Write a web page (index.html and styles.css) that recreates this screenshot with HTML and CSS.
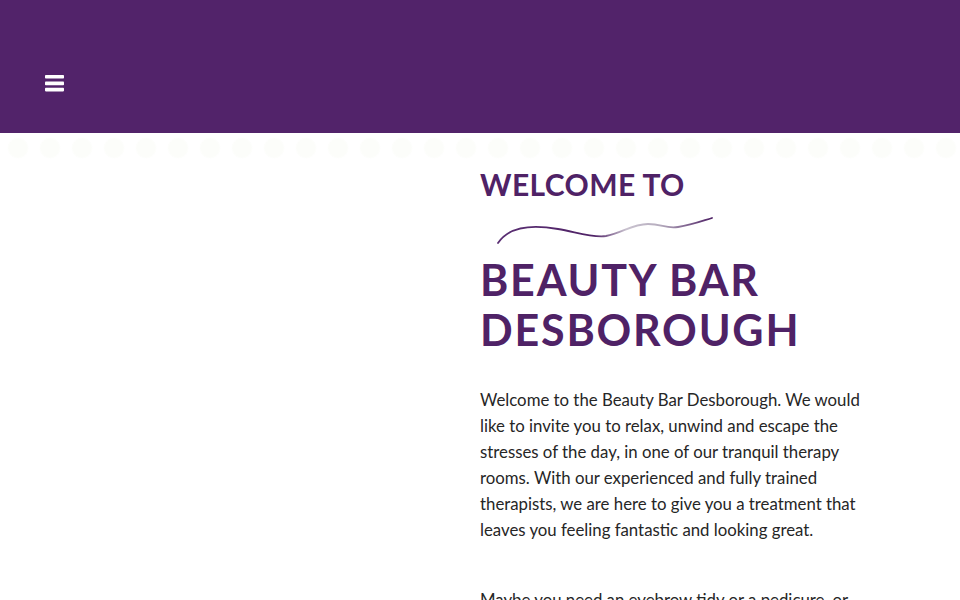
FILE: index.html
```html
<!DOCTYPE html>
<html lang="en">
<head>
<meta charset="utf-8">
<title>Beauty Bar Desborough</title>
<link rel="stylesheet" href="styles.css">
</head>
<body>
<header class="site-header">
  <button class="menu-toggle" aria-label="Menu">
    <svg width="19" height="17" viewBox="0 0 19 17">
      <rect x="0" y="0" width="19" height="3.6" rx="0.8" fill="#fff"/>
      <rect x="0" y="6.6" width="19" height="3.6" rx="0.8" fill="#fff"/>
      <rect x="0" y="12.8" width="19" height="3.6" rx="0.8" fill="#fff"/>
    </svg>
  </button>
</header>
<div class="dots"></div>
<main class="intro">
  <div class="intro-media"></div>
  <section class="intro-text">
    <h2 class="kicker">WELCOME TO</h2>
    <svg class="swoosh" width="220" height="34" viewBox="0 0 220 34">
      <defs>
        <linearGradient id="sw" x1="0" y1="0" x2="1" y2="0">
          <stop offset="0" stop-color="#5a2f73"/>
          <stop offset="0.45" stop-color="#4f2266"/>
          <stop offset="0.6" stop-color="#c9c2cf"/>
          <stop offset="0.75" stop-color="#b7aebf"/>
          <stop offset="1" stop-color="#4f2266"/>
        </linearGradient>
      </defs>
      <path d="M2 32 C 14 14, 40 14, 62 18 C 80 21, 96 27, 110 25 C 126 22, 136 13, 152 13 C 166 13, 170 18, 182 16 C 196 14, 206 10, 216 7" fill="none" stroke="url(#sw)" stroke-width="1.8" stroke-linecap="round"/>
    </svg>
    <h1 class="title">BEAUTY BAR DESBOROUGH</h1>
    <p class="lead">Welcome to the Beauty Bar Desborough. We would like to invite you to relax, unwind and escape the stresses of the day, in one of our tranquil therapy rooms. With our experienced and fully trained therapists, we are here to give you a treatment that leaves you feeling fantastic and looking great.</p>
    <p class="lead">Maybe you need an eyebrow tidy or a pedicure, or</p>
  </section>
</main>
</body>
</html>
```

FILE: styles.css
```css
html, body {
  margin: 0;
  padding: 0;
  background: #ffffff;
}
body {
  font-family: "Lato", "Noto Sans", sans-serif;
  color: #222;
  overflow: hidden;
  height: 600px;
}
.site-header {
  height: 133px;
  background: #52236a;
  display: flex;
  align-items: center;
  padding-left: 45px;
  box-sizing: border-box;
}
.menu-toggle {
  background: none;
  border: 0;
  padding: 0;
  margin-top: 33px;
  width: 19px;
  height: 17px;
  display: block;
  cursor: pointer;
}
.menu-toggle svg { display: block; }
.dots {
  height: 28px;
  background-image: radial-gradient(circle, #fcfdfa 0 9px, rgba(255,255,255,0) 11px);
  background-size: 32px 28px;
  background-position: 2px 1px;
  margin-bottom: -28px;
}
.intro {
  display: grid;
  grid-template-columns: 480px 480px;
}
.intro-text {
  padding-top: 36px;
  padding-right: 90px;
}
.kicker {
  margin: 0;
  font-family: "Lato", sans-serif;
  font-weight: 700;
  font-size: 30px;
  line-height: 30px;
  letter-spacing: 0.4px;
  color: #4f2266;
}
.swoosh {
  display: block;
  margin: 12px 0 0 16px;
}
.title {
  margin: 10px 0 0;
  font-family: "Lato", sans-serif;
  font-weight: 700;
  font-size: 43px;
  line-height: 50px;
  letter-spacing: 1.8px;
  color: #4f2266;
}
.lead {
  margin: 32px 0 0;
  font-size: 16.8px;
  line-height: 26px;
  color: #262626;
  width: 392px;
}
.lead + .lead {
  margin-top: 44px;
}
```
